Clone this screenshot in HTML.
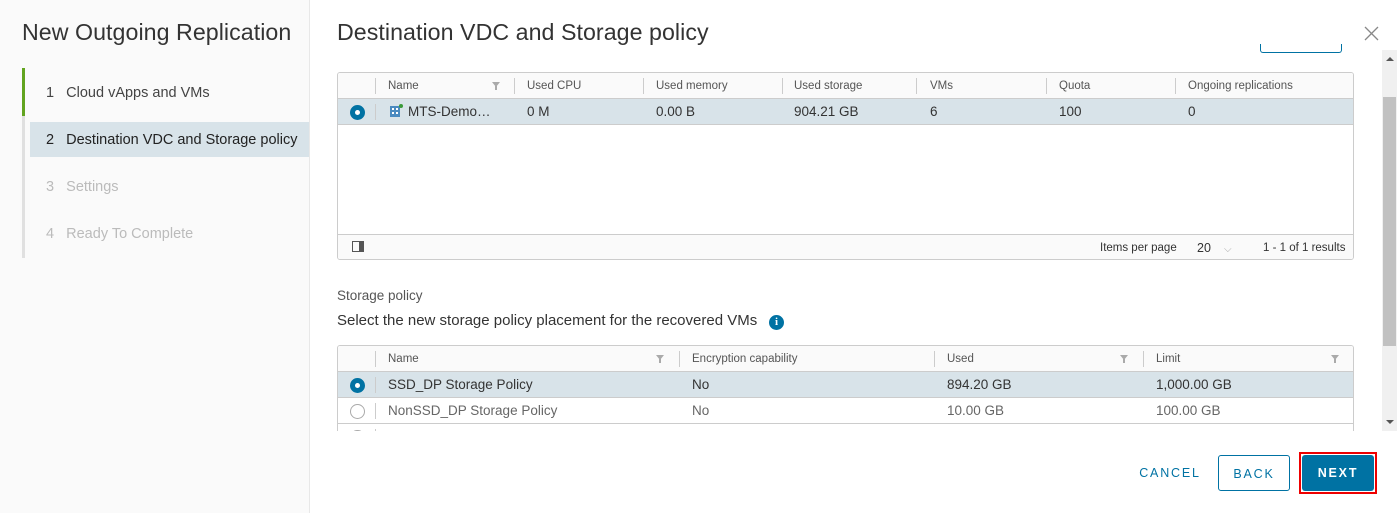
<!DOCTYPE html>
<html><head><style>
*{box-sizing:border-box;margin:0;padding:0}
body{width:1397px;height:513px;overflow:hidden;background:#fff;font-family:"Liberation Sans",sans-serif;color:#333;position:relative;font-size:13px}
.abs{position:absolute}
.left{left:0;top:0;width:310px;height:513px;background:#fafafa;border-right:1px solid #e8e8e8}
h1{font-weight:normal;font-size:23.2px;color:#333;position:absolute;letter-spacing:0.05px}
.step{position:absolute;left:46px;font-size:14.5px;color:#444;white-space:nowrap}
.dim{color:#bbb}
.tbl{position:absolute;left:337px;width:1017px;border:1px solid #ccc;border-radius:3px;overflow:hidden;background:#fff}
.hd{position:absolute;left:0;right:0;top:0;height:26px;background:#fafafa;border-bottom:1px solid #ccc}
.row{position:absolute;left:0;right:0;height:26px;border-bottom:1px solid #ccc}
.sel{background:#d8e3e9}
.c{position:absolute;top:0;line-height:26px;font-size:13.5px;white-space:nowrap}
.hd .c{font-size:11.5px;color:#555}
.sep{position:absolute;top:5px;width:1px;height:16px;background:#ccc}
.rad{position:absolute;left:12px;top:6px;width:15px;height:15px;border-radius:50%}
.on{background:#0072a3;}
.on:after{content:"";position:absolute;left:5px;top:5px;width:5px;height:5px;border-radius:50%;background:#fff}
.off{border:1px solid #aaa;background:#fff}
.flt{position:absolute;top:9px;width:0;height:0;border-left:4px solid transparent;border-right:4px solid transparent;border-top:5px solid #aaa}
.flt:after{content:"";position:absolute;left:-1px;top:-1px;width:2px;height:4px;background:#aaa}
.btn{position:absolute;top:455px;height:36px;border-radius:3px;font-size:12.5px;letter-spacing:1.8px;text-align:center;line-height:36px}
</style></head><body>
<div class="abs left"></div>
<h1 style="left:22px;top:19px">New Outgoing Replication</h1>
<div class="abs" style="left:22px;top:68px;width:3px;height:190px;background:#e0e0e0"></div>
<div class="abs" style="left:22px;top:68px;width:3px;height:48px;background:#62a420"></div>
<div class="abs" style="left:30px;top:122px;width:279px;height:35px;background:#d8e3e9"></div>
<div class="step" style="top:85px">1&nbsp;&nbsp;&nbsp;Cloud vApps and VMs</div>
<div class="step" style="top:132px;color:#222">2&nbsp;&nbsp;&nbsp;Destination VDC and Storage policy</div>
<div class="step dim" style="top:179px">3&nbsp;&nbsp;&nbsp;Settings</div>
<div class="step dim" style="top:226px">4&nbsp;&nbsp;&nbsp;Ready To Complete</div>

<h1 style="left:337px;top:19px">Destination VDC and Storage policy</h1>
<svg class="abs" style="left:1364px;top:26px" width="15" height="15"><path d="M1 1L14 14M14 1L1 14" stroke="#888" stroke-width="1.3"/></svg>
<div class="abs" style="left:1260px;top:44px;width:82px;height:9px;border:1px solid #0072a3;border-top:none;border-radius:0 0 3px 3px"></div>
<div class="abs" style="left:1382px;top:50px;width:15px;height:381px;background:#f0f0f0"></div>
<div class="abs" style="left:1383px;top:97px;width:13px;height:249px;background:#c1c1c1"></div>
<div class="abs" style="left:1386px;top:57px;border-left:4px solid transparent;border-right:4px solid transparent;border-bottom:4px solid #555"></div>
<div class="abs" style="left:1386px;top:420px;border-left:4px solid transparent;border-right:4px solid transparent;border-top:4px solid #555"></div>

<div class="tbl" style="top:72px;height:188px">
 <div class="hd">
  <div class="sep" style="left:37px"></div>
  <div class="c" style="left:50px">Name</div><div class="flt" style="left:154px"></div>
  <div class="sep" style="left:176px"></div><div class="c" style="left:189px">Used CPU</div>
  <div class="sep" style="left:305px"></div><div class="c" style="left:318px">Used memory</div>
  <div class="sep" style="left:444px"></div><div class="c" style="left:456px">Used storage</div>
  <div class="sep" style="left:578px"></div><div class="c" style="left:592px">VMs</div>
  <div class="sep" style="left:708px"></div><div class="c" style="left:721px">Quota</div>
  <div class="sep" style="left:837px"></div><div class="c" style="left:850px">Ongoing replications</div>
 </div>
 <div class="row sel" style="top:26px">
  <div class="rad on"></div><div class="sep" style="left:37px"></div>
  <svg class="abs" style="left:51px;top:5px" width="14" height="14"><rect x="1" y="2" width="10" height="11" fill="#4a8ac0"/><g fill="#fff"><rect x="3" y="4" width="2" height="2"/><rect x="7" y="4" width="2" height="2"/><rect x="3" y="8" width="2" height="2"/><rect x="7" y="8" width="2" height="2"/></g><circle cx="12" cy="2" r="2" fill="#3a9a3a"/></svg>
  <div class="c" style="left:70px">MTS-Demo…</div>
  <div class="c" style="left:189px">0 M</div>
  <div class="c" style="left:318px">0.00 B</div>
  <div class="c" style="left:456px">904.21 GB</div>
  <div class="c" style="left:592px">6</div>
  <div class="c" style="left:721px">100</div>
  <div class="c" style="left:850px">0</div>
 </div>
 <div class="abs" style="left:0;right:0;top:161px;height:26px;border-top:1px solid #ccc;background:#fafafa">
  <div class="abs" style="left:14px;top:6px;width:12px;height:11px;border:1px solid #555;border-right:5px solid #555"></div>
  <div class="c" style="left:762px;font-size:11.5px">Items per page</div>
  <div class="c" style="left:859px;font-size:12.5px">20</div>
  <div class="c" style="left:886px;color:#aaa;font-size:10px;top:2px">⌵</div>
  <div class="abs" style="left:852px;top:24px;width:50px;height:1px;background:#ccc"></div>
  <div class="c" style="left:925px;font-size:11.5px">1 - 1 of 1 results</div>
 </div>
</div>

<div class="abs" style="left:337px;top:288px;font-size:13.5px;color:#555">Storage policy</div>
<div class="abs" style="left:337px;top:312px;font-size:15px;color:#333">Select the new storage policy placement for the recovered VMs</div>
<div class="abs" style="left:769px;top:315px;width:15px;height:15px;border-radius:50%;background:#0072a3;color:#fff;font-size:11px;font-weight:bold;text-align:center;line-height:15px;font-family:'Liberation Serif',serif">i</div>

<div class="tbl" style="top:345px;height:120px;clip-path:inset(0 0 25px 0);border-bottom:none">
 <div class="hd">
  <div class="sep" style="left:37px"></div>
  <div class="c" style="left:50px">Name</div><div class="flt" style="left:318px"></div>
  <div class="sep" style="left:341px"></div><div class="c" style="left:354px">Encryption capability</div>
  <div class="sep" style="left:596px"></div><div class="c" style="left:609px">Used</div><div class="flt" style="left:782px"></div>
  <div class="sep" style="left:805px"></div><div class="c" style="left:818px">Limit</div><div class="flt" style="left:993px"></div>
 </div>
 <div class="row sel" style="top:26px">
  <div class="rad on"></div><div class="sep" style="left:37px"></div>
  <div class="c" style="left:50px">SSD_DP Storage Policy</div>
  <div class="c" style="left:354px">No</div>
  <div class="c" style="left:609px">894.20 GB</div>
  <div class="c" style="left:818px">1,000.00 GB</div>
 </div>
 <div class="row" style="top:52px;color:#666">
  <div class="rad off"></div><div class="sep" style="left:37px"></div>
  <div class="c" style="left:50px">NonSSD_DP Storage Policy</div>
  <div class="c" style="left:354px">No</div>
  <div class="c" style="left:609px">10.00 GB</div>
  <div class="c" style="left:818px">100.00 GB</div>
 </div>
 <div class="row" style="top:78px;border:none"><div class="rad off"></div><div class="sep" style="left:37px"></div></div>
</div>
<div class="abs" style="left:310px;top:431px;width:1072px;height:30px;background:#fff"></div>

<div class="btn" style="left:1130px;width:80px;color:#0072a3">CANCEL</div>
<div class="btn" style="left:1218px;width:72px;border:1px solid #0072a3;color:#0072a3">BACK</div>
<div class="abs" style="left:1299px;top:452px;width:78px;height:42px;border:2px solid #e00"></div>
<div class="btn" style="left:1302px;width:72px;background:#0072a3;color:#fff;font-weight:bold">NEXT</div>
</body></html>
